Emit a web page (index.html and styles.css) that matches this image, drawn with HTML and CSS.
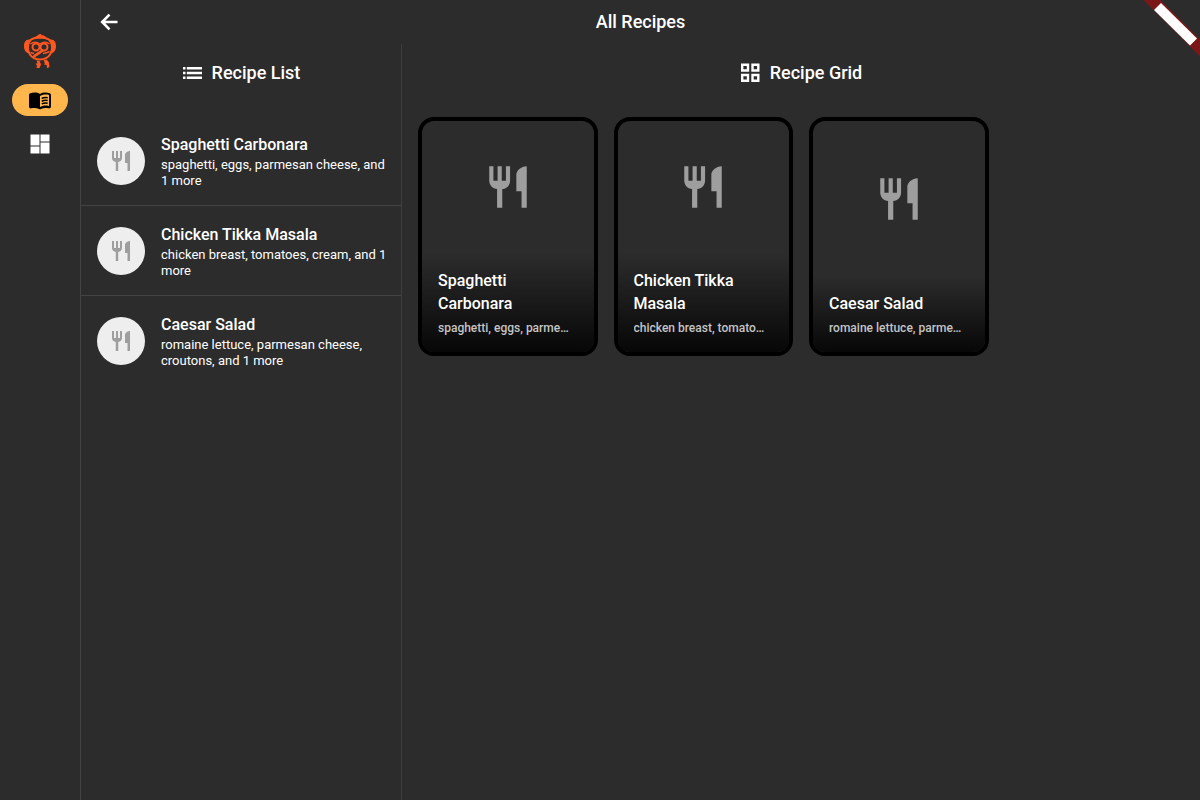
FILE: index.html
```html
<!DOCTYPE html>
<html lang="en">
<head>
<meta charset="utf-8">
<meta name="viewport" content="width=device-width, initial-scale=1">
<title>All Recipes</title>
<link rel="stylesheet" href="styles.css">
</head>
<body>
<svg class="defs" aria-hidden="true">
  <symbol id="restaurant" viewBox="0 0 24 24"><path d="M11 9H9V2H7v7H5V2H3v7c0 2.120 1.660 3.840 3.750 3.970V22h2.500v-9.030C11.340 12.840 13 11.120 13 9V2h-2v7zm5-3v8h2.500v8H21V2c-2.760 0-5 2.240-5 4z"/></symbol>
</svg>
<div class="app">
  <nav class="rail" aria-label="Main">
    <svg class="logo" viewBox="0 0 34 36" role="img" aria-label="Logo">
      <g fill="none" stroke="currentColor" stroke-width="2">
        <path d="M7 7.500C10 4.800 13 4.500 17 4.500S24 4.800 27 7.500C30 12 29.500 18 27 21.500C23 28 11 28 7 21.500C4.500 18 4 12 7 7.500Z"/>
        <circle cx="13" cy="14" r="3.500"/>
        <circle cx="21" cy="14" r="3.500"/>
        <path d="M7.500 11C10 8.500 14 8.500 17 11C20 8.500 24 8.500 26.500 11" stroke-width="1.200"/>
        <path d="M7.500 19.500L11 20.500M20 20.500C22.500 20.500 24.500 19.500 26.500 18.500" stroke-width="1.400"/>
      </g>
      <g fill="currentColor">
        <path d="M7 6.500C3 6 1 9 1 13C1 18 4 21 7 20C4.500 16 5 11 8 8ZM27 6.500C31 6 33 9 33 13C33 18 30 21 27 20C29.500 16 29 11 26 8Z"/>
        <path d="M11 4.500C14 3.500 15 1 18 1L18.500 2.300C21 1.800 22 3 23.500 4.500L20 5.500H13Z"/>
        <path d="M19.500 16L10.500 22L9 24.500L12.500 24L20.500 18.500Z"/>
        <path d="M13.500 27.500l3 .3L18 31.500L16.500 35H13.500l.5-2.500-1.500-1.700 2-.5ZM20.500 27.500l3.200-1L26 29.500l.5 4.500-2.500 1.300-.3-3.300-2.700-.5.800-1.500Z"/>
      </g>
    </svg>
    <a class="rail-link rail-link-active" href="#recipes" aria-label="Recipes" aria-current="page">
      <svg class="icon" viewBox="0 0 24 24"><path d="M17.500 4.500c-1.950 0-4.050.4-5.500 1.500-1.450-1.100-3.550-1.500-5.500-1.500-1.450 0-2.990.22-4.280.79C1.490 5.620 1 6.330 1 7.140v11.280c0 1.300 1.220 2.260 2.480 1.940.98-.25 2.020-.36 3.020-.36 1.560 0 3.220.26 4.560.92.600.3 1.280.3 1.870 0 1.340-.67 3-.92 4.560-.92 1 0 2.040.11 3.020.36 1.260.33 2.480-.63 2.480-1.940V7.140c0-.81-.49-1.520-1.220-1.850-1.280-.57-2.820-.79-4.270-.79zM21 18c-1.100-.35-2.300-.5-3.500-.5-1.700 0-4.150.65-5.500 1.500V8c1.350-.85 3.800-1.500 5.500-1.500 1.200 0 2.400.15 3.500.5V18z"/><path d="M13.700 10.500c2-.9 4-1.200 6-.7M13.700 13.200c2-.9 4-1.200 6-.7M13.700 15.900c2-.9 4-1.200 6-.7" fill="none" stroke="currentColor" stroke-width="1.500"/></svg>
    </a>
    <a class="rail-link" href="#dashboard" aria-label="Dashboard">
      <svg class="icon" viewBox="0 0 24 24"><path d="M2.500 2.500h9v11h-9zM12.500 2.500h9v7h-9zM2.500 14.500h9v7h-9zM12.500 10.500h9v11h-9z"/></svg>
    </a>
  </nav>
  <div class="page">
    <header class="topbar">
      <button class="back" type="button" aria-label="Back">
        <svg class="icon" viewBox="0 0 24 24"><path d="M20.500 12H6M12.500 4.700L5.200 12l7.300 7.300" fill="none" stroke="currentColor" stroke-width="2.600"/></svg>
      </button>
      <h1 class="heading">All Recipes</h1>
    </header>
    <main class="panes">
      <section class="list-pane">
        <h2 class="heading pane-heading">
          <svg class="icon-small" viewBox="0 0 20 20"><path d="M1 4h2.500v2.500H1zM1 8.700h2.500v2.500H1zM1 13.400h2.500v2.500H1zM4.800 4H20v2.500H4.800zM4.800 8.700H20v2.500H4.800zM4.800 13.400H20v2.500H4.800z"/></svg>
          Recipe List
        </h2>
        <ul class="list">
          <li class="item">
            <span class="avatar"><svg class="icon"><use href="#restaurant"/></svg></span>
            <div class="item-text"><h3 class="title">Spaghetti Carbonara</h3><p class="detail">spaghetti, eggs, parmesan cheese, and 1 more</p></div>
          </li>
          <li class="item">
            <span class="avatar"><svg class="icon"><use href="#restaurant"/></svg></span>
            <div class="item-text"><h3 class="title">Chicken Tikka Masala</h3><p class="detail">chicken breast, tomatoes, cream, and 1 more</p></div>
          </li>
          <li class="item">
            <span class="avatar"><svg class="icon"><use href="#restaurant"/></svg></span>
            <div class="item-text"><h3 class="title">Caesar Salad</h3><p class="detail">romaine lettuce, parmesan cheese, croutons, and 1 more</p></div>
          </li>
        </ul>
      </section>
      <section class="grid-pane">
        <h2 class="heading pane-heading">
          <svg class="icon-small" viewBox="0 0 20 20"><path d="M2.200 1.700h5.800v5.800H2.200zM12.500 1.700h5.800v5.800h-5.800zM2.200 12h5.800v5.800H2.200zM12.500 12h5.800v5.800h-5.800z" fill="none" stroke="currentColor" stroke-width="2.400"/></svg>
          Recipe Grid
        </h2>
        <div class="grid">
          <article class="card">
            <div class="card-picture"><svg class="icon-large"><use href="#restaurant"/></svg></div>
            <div class="card-text"><h3 class="title">Spaghetti Carbonara</h3><p class="summary">spaghetti, eggs, parme…</p></div>
          </article>
          <article class="card">
            <div class="card-picture"><svg class="icon-large"><use href="#restaurant"/></svg></div>
            <div class="card-text"><h3 class="title">Chicken Tikka Masala</h3><p class="summary">chicken breast, tomato…</p></div>
          </article>
          <article class="card">
            <div class="card-picture"><svg class="icon-large"><use href="#restaurant"/></svg></div>
            <div class="card-text"><h3 class="title">Caesar Salad</h3><p class="summary">romaine lettuce, parme…</p></div>
          </article>
        </div>
      </section>
    </main>
  </div>
</div>
<svg class="ribbon" viewBox="0 0 60 60" aria-hidden="true">
  <path d="M3.500 0H20.500L60 39.500V56.500Z" fill="#7a1718"/>
  <path d="M21 3L57 38.500L50 45.500L14 10Z" fill="#fff"/>
  <path d="M28.200 10.100l-7 7M35.400 17.200l-7 7M42.600 24.300l-7 7M49.800 31.400l-7 7" stroke="#e9dcdc" stroke-width=".5"/>
</svg>
</body>
</html>
```
FILE: styles.css
```css
* {
  box-sizing: border-box;
}

body {
  margin: 0;
  background: #2c2c2c;
  color: #fff;
  font-family: Roboto, "Liberation Sans", sans-serif;
}

h1, h2, h3, p, ul {
  margin: 0;
  padding: 0;
}

svg {
  display: block;
  fill: currentColor;
}

.defs {
  position: absolute;
  width: 0;
  height: 0;
}

.icon {
  width: 24px;
  height: 24px;
}

.icon-small {
  width: 20px;
  height: 20px;
}

.icon-large {
  width: 50px;
  height: 50px;
}

.app {
  display: flex;
  min-height: 100vh;
}

.rail {
  display: flex;
  flex: none;
  flex-direction: column;
  align-items: center;
  gap: 12px;
  width: 81px;
  padding-top: 33px;
  border-right: 1px solid #434343;
}

.logo {
  width: 34px;
  height: 36px;
  margin-bottom: 3px;
  color: #ff5722;
}

.rail-link {
  display: flex;
  align-items: center;
  justify-content: center;
  width: 56px;
  height: 32px;
  border-radius: 16px;
  color: #fff;
}

.rail-link-active {
  background: #ffb74d;
  color: #000;
}

.page {
  display: flex;
  flex: 1;
  flex-direction: column;
  min-width: 0;
}

.topbar {
  display: grid;
  grid-template-columns: 56px 1fr 56px;
  align-items: center;
  height: 44px;
}

.back {
  display: flex;
  justify-content: center;
  padding: 0;
  border: 0;
  background: none;
  color: inherit;
  cursor: pointer;
}

.heading {
  font-size: 18px;
  font-weight: 500;
  line-height: 26px;
  text-align: center;
}

.panes {
  display: flex;
  flex: 1;
}

.list-pane {
  flex: none;
  width: 321px;
  border-right: 1px solid #3e3e3e;
}

.grid-pane {
  flex: 1;
  min-width: 0;
}

.pane-heading {
  display: flex;
  align-items: center;
  justify-content: center;
  gap: 10px;
  padding: 16px;
}

.list {
  padding-top: 14px;
  list-style: none;
}

.item {
  display: flex;
  align-items: center;
  gap: 16px;
  min-height: 90px;
  padding: 16px 10px 16px 16px;
  border-bottom: 1px solid #434343;
}

.item:last-child {
  border-bottom-color: transparent;
}

.avatar {
  display: flex;
  flex: none;
  align-items: center;
  justify-content: center;
  width: 48px;
  height: 48px;
  border-radius: 50%;
  background: #eee;
  color: #9e9e9e;
}

.title {
  font-size: 16px;
  font-weight: 500;
  line-height: 24px;
}

.detail {
  font-size: 13px;
  font-weight: 400;
  line-height: 16px;
}

.grid {
  display: grid;
  grid-template-columns: repeat(4, 1fr);
  gap: 16px;
  padding: 15px 16px;
}

.card {
  display: flex;
  flex-direction: column;
  aspect-ratio: 3 / 4;
  overflow: hidden;
  border: 4px solid #000;
  border-radius: 16px;
}

.card-picture {
  display: flex;
  flex: 1;
  align-items: center;
  justify-content: center;
  color: #9e9e9e;
}

.card-text {
  padding: 16px;
  background: linear-gradient(transparent, rgba(0, 0, 0, 0.85));
}

.card-text .title {
  line-height: 23px;
}

.summary {
  margin-top: 5px;
  overflow: hidden;
  color: #c4c4c4;
  font-size: 12px;
  font-weight: 500;
  line-height: 16px;
  text-overflow: ellipsis;
  white-space: nowrap;
}

.ribbon {
  position: absolute;
  top: 0;
  right: 0;
  width: 60px;
  height: 60px;
}
```
